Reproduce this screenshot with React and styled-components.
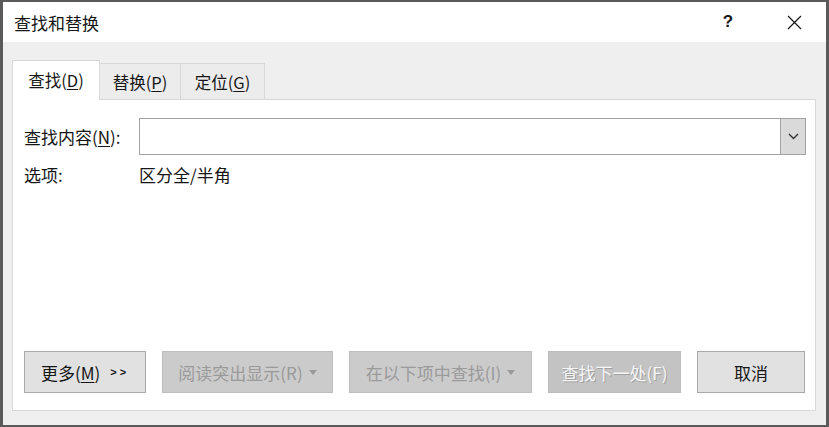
import React from "react";
import styled, { createGlobalStyle } from "styled-components";

const GlobalStyle = createGlobalStyle`
  html, body {
    margin: 0;
    padding: 0;
    background: #ffffff;
  }
  * {
    box-sizing: border-box;
  }
`;

const FONT = `"Noto Sans CJK SC", "Liberation Sans", sans-serif`;

const Window = styled.div`
  width: 829px;
  height: 427px;
  display: flex;
  flex-direction: column;
  background: #efefef;
  border-top: 2px solid #5a5a5a;
  border-left: 3px solid #5a5a5a;
  border-right: 3px solid #5a5a5a;
  border-bottom: 2px solid #5a5a5a;
  font-family: ${FONT};
  color: #161616;
`;

const TitleBar = styled.div`
  height: 40px;
  flex: none;
  background: #ffffff;
  display: flex;
  align-items: center;
  padding-left: 11px;
  font-size: 17px;
`;

const Title = styled.div`
  flex: 1;
`;

const Help = styled.div`
  width: 28px;
  text-align: center;
  font-family: "Liberation Sans", sans-serif;
  font-size: 17px;
  font-weight: bold;
  margin-right: 38px;
`;

const Close = styled.div`
  width: 28px;
  display: flex;
  justify-content: center;
  margin-right: 18px;
`;

const Body = styled.div`
  flex: 1;
  display: flex;
  flex-direction: column;
  padding: 18px 10px 14px 9px;
`;

const Tabs = styled.div`
  display: flex;
  align-items: flex-end;
  height: 40px;
  position: relative;
  z-index: 1;
  margin-bottom: -1px;
`;

const Tab = styled.div`
  width: ${(p) => p.$w}px;
  height: ${(p) => (p.$active ? 40 : 37)}px;
  display: flex;
  align-items: center;
  justify-content: center;
  font-size: 16.5px;
  background: ${(p) => (p.$active ? "#ffffff" : "#ececec")};
  border: 1px solid #d8d8d8;
  border-bottom: ${(p) => (p.$active ? "none" : "1px solid #d8d8d8")};
  border-left: ${(p) => (p.$first ? "1px solid #d8d8d8" : "none")};
  padding-bottom: ${(p) => (p.$active ? "2px" : "0")};
`;

const Key = styled.span`
  text-decoration: underline;
  text-underline-offset: 2px;
`;

const Panel = styled.div`
  height: 312px;
  background: #ffffff;
  border: 1px solid #d8d8d8;
  display: flex;
  flex-direction: column;
  padding: 18px 9px 17px 11px;
`;

const Row = styled.div`
  display: flex;
  align-items: center;
  height: ${(p) => p.$h}px;
  font-size: 17px;
`;

const Label = styled.div`
  width: 115px;
  flex: none;
`;

const Combo = styled.div`
  flex: 1;
  height: 37px;
  border: 1px solid #a3a3a3;
  display: flex;
  justify-content: flex-end;
  background: #ffffff;
`;

const DropButton = styled.div`
  width: 25px;
  background: #dadada;
  border-left: 1px solid #a3a3a3;
  display: flex;
  align-items: center;
  justify-content: center;
`;

const Spacer = styled.div`
  flex: 1;
`;

const Buttons = styled.div`
  display: flex;
  gap: 16px;
`;

const Button = styled.div`
  width: ${(p) => p.$w}px;
  height: 42px;
  display: flex;
  align-items: center;
  justify-content: center;
  gap: 6px;
  font-size: 17px;
  background: ${(p) => (p.$disabled ? "#cbcbcb" : "#e1e1e1")};
  border: 1px solid ${(p) => (p.$disabled ? "#bdbdbd" : "#a9a9a9")};
  color: ${(p) => (p.$disabled ? "#9a9a9a" : "#161616")};
  ${(p) =>
    p.$embossed &&
    `
    background: #c3c3c3;
    border-color: #bcbcbc;
    color: #f6f6f6;
    text-shadow: 1px 1px 0 #a0a0a0;
  `}
`;

const Chevrons = styled.span`
  font-family: "Liberation Sans", sans-serif;
  font-size: 11px;
  font-weight: bold;
  letter-spacing: 3px;
  margin-left: 4px;
`;

const CloseIcon = () => (
  <svg width="15" height="15" viewBox="0 0 15 15">
    <path d="M1 1 L14 14 M14 1 L1 14" stroke="#161616" strokeWidth="1.2" />
  </svg>
);

const ChevronDown = () => (
  <svg width="11" height="7" viewBox="0 0 11 7">
    <path d="M1 1 L5.5 5.5 L10 1" fill="none" stroke="#333" strokeWidth="1.4" />
  </svg>
);

const Caret = () => (
  <svg width="8" height="5" viewBox="0 0 8 5">
    <path d="M0 0 L8 0 L4 5 Z" fill="#9a9a9a" />
  </svg>
);

export default function App() {
  return (
    <>
      <GlobalStyle />
      <Window>
        <TitleBar>
          <Title>查找和替换</Title>
          <Help>?</Help>
          <Close>
            <CloseIcon />
          </Close>
        </TitleBar>
        <Body>
          <Tabs>
            <Tab $active $first $w={88}>
              查找(<Key>D</Key>)
            </Tab>
            <Tab $w={81}>
              替换(<Key>P</Key>)
            </Tab>
            <Tab $w={84}>
              定位(<Key>G</Key>)
            </Tab>
          </Tabs>
          <Panel>
            <Row $h={37}>
              <Label>
                查找内容(<Key>N</Key>):
              </Label>
              <Combo>
                <DropButton>
                  <ChevronDown />
                </DropButton>
              </Combo>
            </Row>
            <Row $h={38}>
              <Label>选项:</Label>
              <div>区分全/半角</div>
            </Row>
            <Spacer />
            <Buttons>
              <Button $w={122}>
                <span>
                  更多(<Key>M</Key>)
                </span>
                <Chevrons>&gt;&gt;</Chevrons>
              </Button>
              <Button $w={171} $disabled>
                阅读突出显示(R)
                <Caret />
              </Button>
              <Button $w={183} $disabled>
                在以下项中查找(I)
                <Caret />
              </Button>
              <Button $w={133} $embossed>
                查找下一处(F)
              </Button>
              <Button $w={108}>取消</Button>
            </Buttons>
          </Panel>
        </Body>
      </Window>
    </>
  );
}
